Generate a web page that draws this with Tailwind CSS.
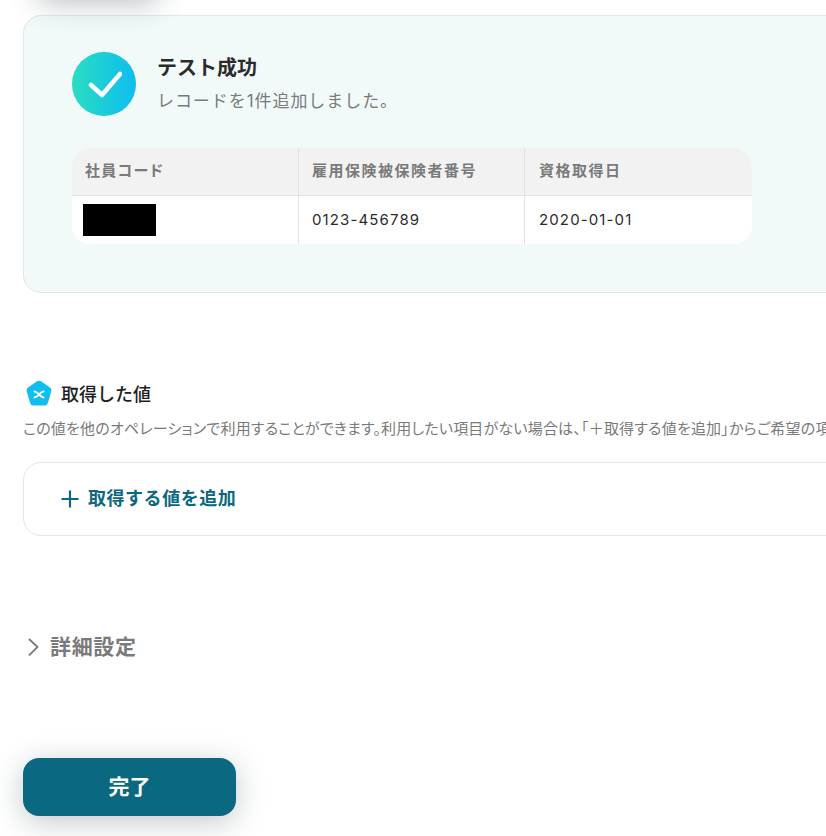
<!DOCTYPE html>
<html lang="ja">
<head>
    <meta name="viewport" content="width=device-width, initial-scale=1.0">
    <meta charset="UTF-8">
    <title>テスト成功</title>
    <script src="https://cdn.jsdelivr.net/npm/@tailwindcss/browser@4"></script>
</head>
<body class="bg-white font-['Inter','Noto_Sans_CJK_JP',sans-serif] text-[#2b2b2b]">
    <div class="relative h-[836px] w-[826px] overflow-hidden pl-[23px] pt-[15px]">
        <!-- 上のボタンの影だけ見えている -->
        <div class="absolute left-[36px] top-[-50px] h-[50px] w-[124px] rounded-2xl bg-white shadow-[0_4px_28px_rgba(40,60,70,0.3)]"></div>

        <!-- テスト結果 -->
        <section class="h-[278px] w-[900px] rounded-[18px] border border-[#e2e6e6] bg-[#f1faf9] pl-[48px] pt-[36px]">
            <div class="flex items-center gap-[21px]">
                <div class="flex h-[64px] w-[64px] items-center justify-center rounded-full bg-gradient-to-r from-[#2bdcc0] to-[#10bdf0]">
                    <svg width="36" height="30" viewBox="0 0 36 30" fill="none" stroke="white" stroke-width="4.500" stroke-linecap="round" stroke-linejoin="round">
                        <path d="M5 16 L16 26 L34 5"/>
                    </svg>
                </div>
                <div>
                    <p class="text-[20px] leading-[30px] font-semibold text-[#2b2b2b]">テスト成功</p>
                    <p class="mt-[4px] text-[17px] leading-[28px] tracking-[0.055em] text-[#7a7a7a]">レコードを1件追加しました。</p>
                </div>
            </div>
            <div class="mt-[32px] grid w-[680px] grid-cols-[226px_226px_228px] overflow-hidden rounded-[18px] bg-white text-[15px]">
                <div class="flex h-[48px] items-center border-b border-[#e2e2e2] bg-[#f2f2f2] pl-[13px] font-bold tracking-[0.09em] text-[#7a7a7a] [font-feature-settings:'palt']">社員コード</div>
                <div class="flex h-[48px] items-center border-b border-l border-[#e2e2e2] bg-[#f2f2f2] pl-[13px] font-bold tracking-[0.1em] text-[#7a7a7a]">雇用保険被保険者番号</div>
                <div class="flex h-[48px] items-center border-b border-l border-[#e2e2e2] bg-[#f2f2f2] pl-[14px] font-bold tracking-[0.1em] text-[#7a7a7a]">資格取得日</div>
                <div class="flex h-[48px] items-center pl-[11px]"><div class="h-[32px] w-[73px] bg-black"></div></div>
                <div class="flex h-[48px] items-center border-l border-[#e2e2e2] pt-[1px] pl-[13px] tracking-[0.075em]">0123-456789</div>
                <div class="flex h-[48px] items-center border-l border-[#e2e2e2] pt-[1px] pl-[14px] tracking-[0.075em]">2020-01-01</div>
            </div>
        </section>

        <!-- 取得した値 -->
        <div class="mt-[87px] flex h-[30px] items-center gap-[9px] pl-[3px]">
            <svg class="mb-[3px]" width="26" height="27" viewBox="0 0 26 27">
                <path d="M11 1.300 Q13 0 15 1.300 L24 7.600 Q26 9 25.300 11.300 L22 22.800 Q21.300 25.500 18.800 25.500 L7.200 25.500 Q4.700 25.500 4 22.800 L0.700 11.300 Q0 9 2 7.600 Z" fill="#10bdf0"/>
                <path d="M8.500 11.500 Q11 12 13 14.500 Q15 17 17.500 17.500 M17.500 11.500 Q15 12 13 14.500 Q11 17 8.500 17.500" stroke="white" stroke-width="2" stroke-linecap="round" fill="none"/>
            </svg>
            <p class="text-[18px] leading-[30px] font-medium text-[#1f1f1f]">取得した値</p>
        </div>
        <p class="mt-[9px] w-[803px] overflow-hidden text-[15px] leading-[20px] tracking-[0.013em] whitespace-nowrap text-[#7a7a7a] [font-feature-settings:'palt']">この値を他のオペレーションで利用することができます。利用したい項目がない場合は、「＋取得する値を追加」からご希望の項</p>
        <div class="mt-[23px] flex h-[74px] w-[900px] items-center gap-[9px] rounded-[18px] border border-[#e2e6e6] bg-white pl-[37px]">
            <svg width="18" height="18" viewBox="0 0 18 18" stroke="#0b6880" stroke-width="2.200" fill="none">
                <path d="M9 0.500 V17.500 M0.500 9 H17.500"/>
            </svg>
            <span class="pb-[1px] text-[18px] font-semibold tracking-[0.03em] text-[#0b6880]">取得する値を追加</span>
        </div>

        <!-- 詳細設定 -->
        <div class="mt-[93px] flex h-[36px] items-center gap-[11px] pl-[5px]">
            <svg width="11" height="18" viewBox="0 0 11 18" stroke="#7a7a7a" stroke-width="1.800" fill="none">
                <path d="M1 1 L9.500 9 L1 17.500"/>
            </svg>
            <span class="text-[21px] font-bold tracking-[0.03em] text-[#7a7a7a]">詳細設定</span>
        </div>

        <!-- 完了ボタン -->
        <button class="mt-[93px] flex h-[58px] w-[213px] items-center justify-center rounded-2xl bg-[#0a6880] text-[21px] font-bold text-white shadow-[0_6px_30px_rgba(40,60,70,0.28)]">完了</button>
    </div>
</body>
</html>
